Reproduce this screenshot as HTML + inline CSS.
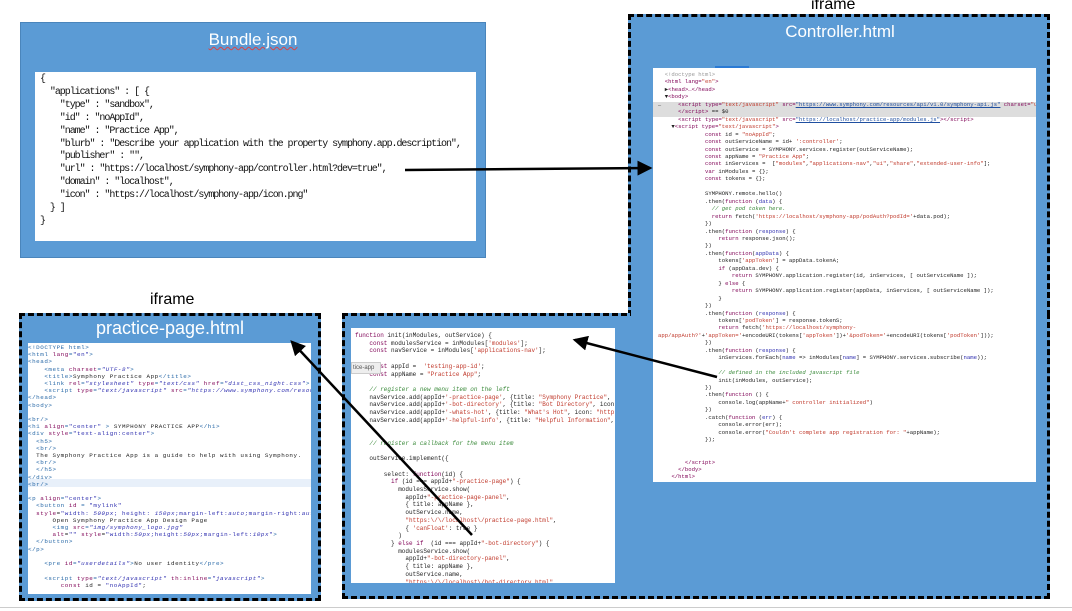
<!DOCTYPE html>
<html><head><meta charset="utf-8"><style>
*{margin:0;padding:0;box-sizing:border-box}
body{width:1072px;height:611px;background:#fff;position:relative;overflow:hidden;font-family:"Liberation Sans",sans-serif}
.a{position:absolute}
.blue{background:#5b9bd5}
.dash{border:3px dashed #000}
.w{background:#fff;overflow:hidden}
pre{font-family:"Liberation Mono",monospace;white-space:pre;color:#222}
.t{color:#fff;text-align:center;font-size:17px}
.k{color:#7f0055}.s{color:#c0392b}.c{color:#3a8a3a;font-style:italic}.g{color:#999}.p{color:#3030b0}.b{color:#2a6aa8}
.bl{color:#1f4fa0}
</style></head><body>
<!-- Bundle -->
<div class="a blue" style="left:20px;top:22px;width:466px;height:236px;border:1px solid #4a85bb"></div>
<div class="a t" style="left:20px;top:30px;width:466px;text-decoration:underline wavy #d44;text-decoration-thickness:1px;">Bundle.json</div>
<div class="a w" style="left:35px;top:72px;width:441px;height:169px;">
<pre style="font-size:10px;letter-spacing:-1.05px;line-height:12.9px;padding:2px 0 0 5px;color:#111">{
  "applications" : [ {
    "type" : "sandbox",
    "id" : "noAppId",
    "name" : "Practice App",
    "blurb" : "Describe your application with the property symphony.app.description",
    "publisher" : "",
    "url" : "https://localhost/symphony-app/controller.html?dev=true",
    "domain" : "localhost",
    "icon" : "https://localhost/symphony-app/icon.png"
  } ]
}</pre></div>

<!-- Controller -->
<div class="a" style="left:811px;top:-4px;font-size:16px;color:#000">iframe</div>
<div class="a blue dash" style="left:628px;top:14px;width:422px;height:302px;border-bottom:none"></div>
<div class="a blue dash" style="left:342px;top:313px;width:708px;height:286px;"></div>
<div class="a blue" style="left:631px;top:300px;width:416px;height:20px;"></div>
<div class="a t" style="left:630px;top:22px;width:420px;">Controller.html</div>
<div class="a" style="left:715px;top:66px;width:34px;height:2px;background:#2a7ad5"></div>
<div class="a w" style="left:653px;top:68px;width:383px;height:414px;">
<div class="a" style="left:0;top:34px;width:383px;height:15px;background:#ddd"></div>
<pre style="position:relative;font-size:5.6px;line-height:7.45px;padding:3px 0 0 5px;">  <span class="g">&lt;!doctype html&gt;</span>
  <span class="k">&lt;html lang=<span class="s">"en"</span>&gt;</span>
  ▶<span class="k">&lt;head&gt;…&lt;/head&gt;</span>
  ▼<span class="k">&lt;body&gt;</span>
…     <span class="k">&lt;script type=<span class="s">"text/javascript"</span> src=<span class="bl"><u>"https://www.symphony.com/resources/api/v1.0/symphony-api.js"</u></span> charset=<span class="s">"utf-8"</span>&gt;</span>
      <span class="k">&lt;/script&gt;</span> == $0
      <span class="k">&lt;script type=<span class="s">"text/javascript"</span> src=<span class="bl"><u>"https://localhost/practice-app/modules.js"</u></span>&gt;&lt;/script&gt;</span>
    ▼<span class="k">&lt;script type=<span class="s">"text/javascript"</span>&gt;</span>
              <span class="k">const</span> id = <span class="s">"noAppId"</span>;
              <span class="k">const</span> outServiceName = id+ <span class="s">':controller'</span>;
              <span class="k">const</span> outService = SYMPHONY.services.register(outServiceName);
              <span class="k">const</span> appName = <span class="s">"Practice App"</span>;
              <span class="k">const</span> inServices =  [<span class="s">"modules"</span>,<span class="s">"applications-nav"</span>,<span class="s">"ui"</span>,<span class="s">"share"</span>,<span class="s">"extended-user-info"</span>];
              <span class="k">var</span> inModules = {};
              <span class="k">const</span> tokens = {};

              SYMPHONY.remote.hello()
              .then(<span class="k">function</span> (<span class="p">data</span>) {
                <span class="c">// get pod token here.</span>
                <span class="k">return</span> fetch(<span class="s">'https://localhost/symphony-app/podAuth?podId='</span>+data.pod);
              })
              .then(<span class="k">function</span> (<span class="p">response</span>) {
                  <span class="k">return</span> response.json();
              })
              .then(<span class="k">function</span>(<span class="p">appData</span>) {
                  tokens[<span class="s">'appToken'</span>] = appData.tokenA;
                  <span class="k">if</span> (appData.dev) {
                      <span class="k">return</span> SYMPHONY.application.register(id, inServices, [ outServiceName ]);
                  } <span class="k">else</span> {
                      <span class="k">return</span> SYMPHONY.application.register(appData, inServices, [ outServiceName ]);
                  }
              })
              .then(<span class="k">function</span> (<span class="p">response</span>) {
                  tokens[<span class="s">'podToken'</span>] = response.tokenS;
                  <span class="k">return</span> fetch(<span class="s">'https://localhost/symphony-</span>
<span class="s">app/appAuth?'</span>+<span class="s">'appToken='</span>+encodeURI(tokens[<span class="s">'appToken'</span>])+<span class="s">'&amp;podToken='</span>+encodeURI(tokens[<span class="s">'podToken'</span>]));
              })
              .then(<span class="k">function</span> (<span class="p">response</span>) {
                  inServices.forEach(<span class="p">name</span> =&gt; inModules[<span class="p">name</span>] = SYMPHONY.services.subscribe(<span class="p">name</span>));

                  <span class="c">// defined in the included javascript file</span>
                  init(inModules, outService);
              })
              .then(<span class="k">function</span> () {
                  console.log(appName+<span class="s">" controller initialized"</span>)
              })
              .catch(<span class="k">function</span> (<span class="p">err</span>) {
                  console.error(err);
                  console.error(<span class="s">"Couldn't complete app registration for: "</span>+appName);
              });


        <span class="k">&lt;/script&gt;</span>
      <span class="k">&lt;/body&gt;</span>
    <span class="k">&lt;/html&gt;</span></pre></div>

<!-- Middle -->
<div class="a w" style="left:351px;top:328px;width:264px;height:255px;">
<pre style="font-size:6px;line-height:7.7px;padding:4px 0 0 4px;"><span class="k">function</span> init(inModules, outService) {
    <span class="k">const</span> modulesService = inModules[<span class="s">'modules'</span>];
    <span class="k">const</span> navService = inModules[<span class="s">'applications-nav'</span>];

    <span class="k">const</span> appId =  <span class="s">'testing-app-id'</span>;
    <span class="k">const</span> appName = <span class="s">"Practice App"</span>;

    <span class="c">// register a new menu item on the left</span>
    navService.add(appId+<span class="s">'-practice-page'</span>, {title: <span class="s">"Symphony Practice"</span>,
    navService.add(appId+<span class="s">'-bot-directory'</span>, {title: <span class="s">"Bot Directory"</span>, icon
    navService.add(appId+<span class="s">'-whats-hot'</span>, {title: <span class="s">"What's Hot"</span>, icon: <span class="s">"http</span>
    navService.add(appId+<span class="s">'-helpful-info'</span>, {title: <span class="s">"Helpful Information"</span>,


    <span class="c">// register a callback for the menu item</span>

    outService.implement({

        select: <span class="k">function</span>(id) {
          <span class="k">if</span> (id === appId+<span class="s">"-practice-page"</span>) {
            modulesService.show(
              appId+<span class="s">"-practice-page-panel"</span>,
              { title: appName },
              outService.name,
              <span class="s">"https:\/\/localhost\/practice-page.html"</span>,
              { <span class="s">'canFloat'</span>: true }
            )
          } <span class="k">else if</span>  (id === appId+<span class="s">"-bot-directory"</span>) {
            modulesService.show(
              appId+<span class="s">"-bot-directory-panel"</span>,
              { title: appName },
              outService.name,
              <span class="s">"https:\/\/localhost\/bot-directory.html"</span>,</pre>
<div class="a" style="left:0;top:34px;width:30px;height:12px;background:#eee;border:1px solid #ccc;font-size:6px;color:#555;padding:2px 1px;font-family:'Liberation Sans',sans-serif">tice-app</div>
</div>

<!-- Practice page -->
<div class="a" style="left:150px;top:291px;font-size:16px;color:#000">iframe</div>
<div class="a blue dash" style="left:19px;top:313px;width:302px;height:288px;"></div>
<div class="a t" style="left:20px;top:318px;width:300px;font-size:18px;">practice-page.html</div>
<div class="a w" style="left:28px;top:343px;width:283px;height:251px;">
<div class="a" style="left:0;top:136px;width:283px;height:8px;background:#e8f0fa"></div>
<pre style="position:relative;font-size:5.9px;letter-spacing:0.55px;line-height:7.2px;padding:1px 0 0 0;"><span class="b">&lt;!DOCTYPE html&gt;</span>
<span class="b">&lt;html <span class="k">lang</span>=<span class="p">"en"</span>&gt;</span>
<span class="b">&lt;head&gt;</span>
    <span class="b">&lt;meta <span class="k">charset</span>=<span class="p"><i>"UTF-8"</i></span>&gt;</span>
    <span class="b">&lt;title&gt;</span>Symphony Practice App<span class="b">&lt;/title&gt;</span>
    <span class="b">&lt;link <span class="k">rel</span>=<span class="p"><i>"stylesheet"</i></span> <span class="k">type</span>=<span class="p"><i>"text/css"</i></span> <span class="k">href</span>=<span class="p"><i>"dist_css_night.css"</i></span>&gt;</span>
    <span class="b">&lt;script <span class="k">type</span>=<span class="p"><i>"text/javascript"</i></span> <span class="k">src</span>=<span class="p"><i>"https://www.symphony.com/resources</i></span></span>
<span class="b">&lt;/head&gt;</span>
<span class="b">&lt;body&gt;</span>

<span class="b">&lt;br/&gt;</span>
<span class="b">&lt;h1 <span class="k">align</span>=<span class="p">"center"</span> &gt;</span> SYMPHONY PRACTICE APP<span class="b">&lt;/h1&gt;</span>
<span class="b">&lt;div <span class="k">style</span>=<span class="p">"text-align:center"</span>&gt;</span>
  <span class="b">&lt;h5&gt;</span>
  <span class="b">&lt;br/&gt;</span>
  The Symphony Practice App is a guide to help with using Symphony.
  <span class="b">&lt;br/&gt;</span>
  <span class="b">&lt;/h5&gt;</span>
<span class="b">&lt;/div&gt;</span>
<span class="b">&lt;br/&gt;</span>

<span class="b">&lt;p <span class="k">align</span>=<span class="p">"center"</span>&gt;</span>
  <span class="b">&lt;button <span class="k">id</span> = <span class="p">"mylink"</span></span>
  <span class="k">style</span>=<span class="p">"width: <i>500px</i>; height: <i>150px</i>;margin-left:<i>auto</i>;margin-right:<i>auto</i></span>
      Open Symphony Practice App Design Page
      <span class="b">&lt;img <span class="k">src</span>=<span class="p"><i>"img/symphony_logo.jpg"</i></span></span>
      <span class="k">alt</span>=<span class="p">""</span> <span class="k">style</span>=<span class="p">"width:<i>50px</i>;height:<i>50px</i>;margin-left:<i>10px</i>"</span><span class="b">&gt;</span>
  <span class="b">&lt;/button&gt;</span>
<span class="b">&lt;/p&gt;</span>

    <span class="b">&lt;pre <span class="k">id</span>=<span class="p"><i>"userdetails"</i></span>&gt;</span>No user identity<span class="b">&lt;/pre&gt;</span>

    <span class="b">&lt;script <span class="k">type</span>=<span class="p"><i>"text/javascript"</i></span> <span class="k">th:inline</span>=<span class="p"><i>"javascript"</i></span>&gt;</span>
        <span class="k">const</span> id = <span class="p">"noAppId"</span>;</pre></div>

<!-- bottom line -->
<div class="a" style="left:0;top:607px;width:1072px;height:1px;background:#ccc"></div>

<!-- arrows -->
<svg class="a" style="left:0;top:0" width="1072" height="611">
<defs><marker id="ah" markerWidth="6" markerHeight="6" refX="5" refY="3" orient="auto" markerUnits="strokeWidth"><path d="M0,0 L6,3 L0,6 z" fill="#000"/></marker></defs>
<line x1="405" y1="170" x2="650" y2="168" stroke="#000" stroke-width="2.5" marker-end="url(#ah)"/>
<line x1="717" y1="377" x2="575" y2="340" stroke="#000" stroke-width="2.5" marker-end="url(#ah)"/>
<line x1="472" y1="535" x2="292" y2="342" stroke="#000" stroke-width="2.5" marker-end="url(#ah)"/>
</svg>
</body></html>
